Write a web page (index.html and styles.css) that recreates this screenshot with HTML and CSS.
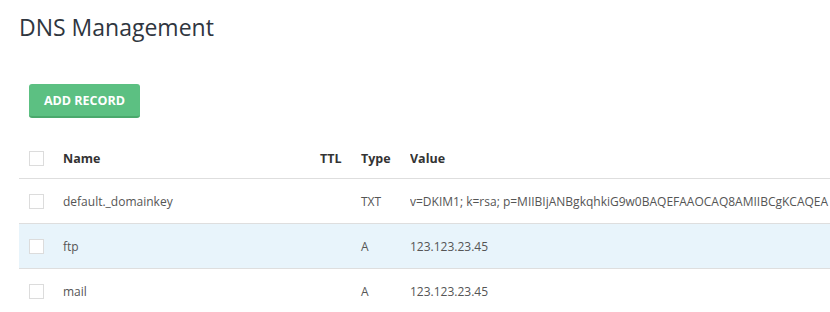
FILE: index.html
```html
<!DOCTYPE html>
<html lang="en">

<head>
	<meta charset="UTF-8">
	<title>DNS Management</title>
	<link rel="stylesheet" href="styles.css">
</head>

<body>
	<div class="page">
		<h1 class="title">DNS Management</h1>
		<div class="toolbar">
			<button class="btn-add">ADD RECORD</button>
		</div>
		<div class="records">
			<!-- header -->
			<div class="row head">
				<div class="cell check"><span class="box"></span></div>
				<div class="cell name">Name</div>
				<div class="cell ttl">TTL</div>
				<div class="cell type">Type</div>
				<div class="cell value">Value</div>
			</div>
			<div class="row">
				<div class="cell check"><span class="box"></span></div>
				<div class="cell name">default._domainkey</div>
				<div class="cell ttl"></div>
				<div class="cell type">TXT</div>
				<div class="cell value">v=DKIM1; k=rsa; p=MIIBIjANBgkqhkiG9w0BAQEFAAOCAQ8AMIIBCgKCAQEA</div>
			</div>
			<div class="row active">
				<div class="cell check"><span class="box"></span></div>
				<div class="cell name">ftp</div>
				<div class="cell ttl"></div>
				<div class="cell type">A</div>
				<div class="cell value">123.123.23.45</div>
			</div>
			<div class="row">
				<div class="cell check"><span class="box"></span></div>
				<div class="cell name">mail</div>
				<div class="cell ttl"></div>
				<div class="cell type">A</div>
				<div class="cell value">123.123.23.45</div>
			</div>
		</div>
	</div>
</body>

</html>
```

FILE: styles.css
```css
body {
	margin: 0;
	background: #fff;
	font-family: "Open Sans", "Noto Sans", sans-serif;
	color: #555;
	overflow: hidden
}

.page {
	padding: 11px 0 0 19px
}

.title {
	margin: 0;
	font-size: 23px;
	font-weight: 400;
	line-height: 33px;
	color: #2f3640
}

.toolbar {
	padding: 40px 0 0 10px
}

.btn-add {
	display: block;
	width: 111px;
	height: 34px;
	padding: 0;
	border: 0;
	border-bottom: 2px solid #4aa96c;
	border-radius: 3px;
	background: #5cc082;
	color: #fff;
	font-family: inherit;
	font-size: 12.5px;
	font-weight: 700
}

.records {
	margin-top: 21px;
	white-space: nowrap
}

.row {
	display: grid;
	grid-template-columns: 44px 257px 41px 49px 1fr;
	align-items: center;
	height: 44px;
	border-bottom: 1px solid #dedede;
	font-size: 12px
}

.row.head {
	height: 39px;
	font-size: 12.5px;
	font-weight: 700;
	color: #333
}

.row.active {
	background: #e8f4fb
}

.cell.check {
	padding-left: 10px;
	display: flex
}

.box {
	display: block;
	width: 13px;
	height: 13px;
	border: 1px solid #dcdcdc;
	background: #fff
}

.cell.value {
	overflow: hidden
}
```
